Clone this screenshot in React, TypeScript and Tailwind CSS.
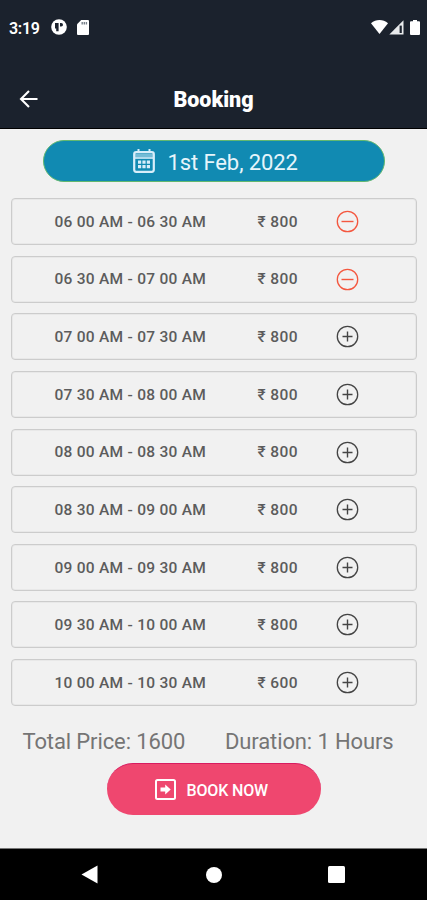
interface Slot {
  time: string;
  price: number;
  selected?: boolean;
}

const slots: Slot[] = [
  { time: "06 00 AM - 06 30 AM", price: 800, selected: true },
  { time: "06 30 AM - 07 00 AM", price: 800, selected: true },
  { time: "07 00 AM - 07 30 AM", price: 800 },
  { time: "07 30 AM - 08 00 AM", price: 800 },
  { time: "08 00 AM - 08 30 AM", price: 800 },
  { time: "08 30 AM - 09 00 AM", price: 800 },
  { time: "09 00 AM - 09 30 AM", price: 800 },
  { time: "09 30 AM - 10 00 AM", price: 800 },
  { time: "10 00 AM - 10 30 AM", price: 600 },
];

function StatusBar() {
  return (
    <div className="flex h-[56px] items-center pl-[9px] pr-[7px] text-white">
      <span className="w-[42px] pt-px text-[16px] font-semibold leading-none tracking-[-0.3px]">3:19</span>
      <svg width="16" height="16" viewBox="0 0 16 16" className="-mt-[2px]">
        <circle cx="8" cy="8" r="7.8" fill="#fff" />
        <path d="M4 4h3.6v8.2H5.2V9.4H4z" fill="#1b222d" />
        <path d="M9 4h1.2a1.8 1.8 0 0 1 0 3.6H9z" fill="#1b222d" />
      </svg>
      <svg width="12" height="15" viewBox="0 0 12 15" className="ml-[10px] -mt-[2px]">
        <path d="M4.2 0H11a1 1 0 0 1 1 1v13a1 1 0 0 1-1 1H1a1 1 0 0 1-1-1V4.2z" fill="#fff" />
        <path d="M4.5 2h1.4v2.4H4.5zM6.6 2H8v2.4H6.6zM8.7 2h1.4v2.4H8.7z" fill="#77808a" />
      </svg>
      <div className="-mt-[2px] ml-auto flex items-center">
        <svg width="17" height="14" viewBox="0 0 17 14">
          <path d="M0 3.2C5 -1 12 -1 17 3.2L8.5 14z" fill="#fff" />
        </svg>
        <svg width="15" height="15" viewBox="0 0 15 15" className="ml-px">
          <path d="M.3 14.5 14.5.3v14.2z" fill="#e8eaec" />
          <path d="M10.6 5.6h2.2v7.4h-2.2z" fill="#1b222d" />
        </svg>
        <svg width="10" height="15" viewBox="0 0 10 15" className="ml-[6px]">
          <path d="M3 0h4v1.2h2a1 1 0 0 1 1 1V14a1 1 0 0 1-1 1H1a1 1 0 0 1-1-1V2.2a1 1 0 0 1 1-1h2z" fill="#fff" />
        </svg>
      </div>
    </div>
  );
}

function Header() {
  return (
    <div className="flex h-[72px] items-center px-[19px] pt-[15px] text-white">
      <svg width="20" height="20" viewBox="0 0 20 20" fill="none" stroke="#fff" strokeWidth="2.1" className="-mt-[2px]">
        <path d="M18.5 10H2.5M10 2 2 10l8 8" />
      </svg>
      <h1 className="flex-1 pr-[20px] pt-px text-center text-[21.5px] font-black leading-none">Booking</h1>
    </div>
  );
}

function CalendarIcon() {
  return (
    <svg width="22" height="24" viewBox="0 0 22 24" fill="none" stroke="#d8eefa">
      <rect x="1.2" y="3.2" width="19.6" height="19.6" rx="2" strokeWidth="2.2" />
      <path d="M5.5 0v4M16.5 0v4" strokeWidth="2" />
      <path d="M2 6.4h18" strokeWidth="3.4" opacity=".5" />
      <path d="M1 9h20" strokeWidth="1.6" />
      <path d="M5 13.2h3.2M9.4 13.2h3.2M13.8 13.2h3.2M5 17.6h3.2M9.4 17.6h3.2M13.8 17.6h3.2" strokeWidth="3.2" />
    </svg>
  );
}

function ToggleIcon({ selected }: { selected?: boolean }) {
  return (
    <svg
      width="23"
      height="23"
      viewBox="0 0 23 23"
      fill="none"
      stroke={selected ? "#f4573f" : "#444444"}
      strokeWidth="1.3"
    >
      <circle cx="11.5" cy="11.5" r="10.2" />
      <path d={selected ? "M5.5 11.5h12" : "M6.5 11.5h10M11.5 6.5v10"} strokeWidth="1.4" />
    </svg>
  );
}

function SlotRow({ slot }: { slot: Slot }) {
  return (
    <div className="flex h-[47px] items-center rounded-[4px] border border-[#cccccc] pl-[42.5px] text-[15.5px] font-medium leading-none text-[#5c5c5c] shadow-[inset_0_0_0_1px_#e8e8e8]">
      <span className="w-[203px] whitespace-nowrap pt-[2px] tracking-[0.27px]">{slot.time}</span>
      <span className="w-[78.5px] whitespace-nowrap pt-[2px] tracking-[0.4px]">₹ {slot.price}</span>
      <button aria-label={slot.selected ? "Remove slot" : "Add slot"}>
        <ToggleIcon selected={slot.selected} />
      </button>
    </div>
  );
}

export default function App() {
  return (
    <div className="flex h-[900px] w-[427px] flex-col overflow-hidden bg-[#f1f1f1] font-[Roboto,sans-serif]">
      <div className="h-[129px] shrink-0 border-b border-black bg-[#1b222d]">
        <StatusBar />
        <Header />
      </div>

      <button className="mx-auto mt-[11px] flex h-[42px] w-[342px] shrink-0 items-center rounded-full border border-[#62b870] bg-[#118ab2] pl-[89px] text-[#e6f5fb]">
        <CalendarIcon />
        <span className="ml-[13px] pt-[3px] text-[22px] leading-none tracking-[-0.1px]">1st Feb, 2022</span>
      </button>

      <div className="mt-[16px] flex flex-col gap-[10.65px] pl-[11px] pr-[10px]">
        {slots.map((slot) => (
          <SlotRow key={slot.time} slot={slot} />
        ))}
      </div>

      <div className="mt-[25px] flex pl-[22.5px] text-[22px] leading-none tracking-[-0.12px] text-[#757575]">
        <span className="w-[202.5px] whitespace-nowrap">Total Price: 1600</span>
        <span className="whitespace-nowrap">Duration: 1 Hours</span>
      </div>

      <button className="mx-auto mt-[10px] flex h-[52px] w-[214px] shrink-0 items-center rounded-full border-t border-[#d81b60] bg-[#ef476f] pl-[48px] text-white">
        <svg width="21" height="21" viewBox="0 0 21 21" fill="none">
          <rect x="1" y="1" width="19" height="19" rx="1.5" stroke="#fff" strokeWidth="2" />
          <path d="M5.5 8.5h4.7V5.5l5.5 5-5.5 5v-3H5.5z" fill="#fff" />
        </svg>
        <span className="ml-[11px] whitespace-nowrap pt-[2px] text-[16px] font-medium leading-none tracking-[-0.15px]">
          BOOK NOW
        </span>
      </button>

      <div className="mt-auto flex h-[52px] shrink-0 items-center border-t border-[#777777] bg-black pl-[81px]">
        <svg width="17" height="19" viewBox="0 0 17 19">
          <path d="M.5 9.5 16.5.5v18z" fill="#fff" />
        </svg>
        <div className="ml-[108px] h-[16px] w-[16px] rounded-full bg-white" />
        <div className="ml-[106px] h-[17px] w-[17px] rounded-[1.5px] bg-white" />
      </div>
    </div>
  );
}
